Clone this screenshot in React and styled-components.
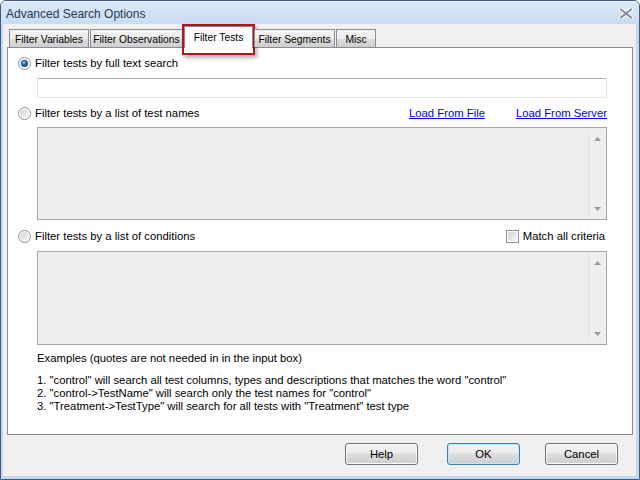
import styled, { createGlobalStyle } from "styled-components";

const GlobalStyle = createGlobalStyle`
  html, body {
    margin: 0;
    padding: 0;
    background: #ffffff;
  }
  * {
    box-sizing: border-box;
  }
`;

const TABS = [
  { label: "Filter Variables", width: 80 },
  { label: "Filter Observations", width: 93 },
  { label: "Filter Tests", width: 69, active: true },
  { label: "Filter Segments", width: 81 },
  { label: "Misc", width: 40 },
];

const EXAMPLES = [
  '1. "control" will search all test columns, types and descriptions that matches the word "control"',
  '2. "control->TestName" will search only the test names for "control"',
  '3. "Treatment->TestType" will search for all tests with "Treatment" test type',
];

const Radio = ({ checked }) => (
  <RadioBox viewBox="0 0 13 13" width="13" height="13">
    <defs>
      <linearGradient id={checked ? "rgA" : "rgB"} x1="0" y1="0" x2="1" y2="1">
        <stop offset="0" stopColor="#cfcfcf" />
        <stop offset="1" stopColor="#fbfbfb" />
      </linearGradient>
      <radialGradient id="dot" cx="0.4" cy="0.35" r="0.7">
        <stop offset="0" stopColor="#8ed0ff" />
        <stop offset="0.5" stopColor="#1b6fb8" />
        <stop offset="1" stopColor="#0b2f55" />
      </radialGradient>
    </defs>
    <circle cx="6.5" cy="6.5" r="6" fill="#ffffff" stroke="#8e8f8f" />
    <circle cx="6.5" cy="6.5" r="4.5" fill={`url(#${checked ? "rgA" : "rgB"})`} />
    {checked && <circle cx="6.5" cy="6.5" r="3.2" fill="url(#dot)" stroke="#1f3f63" strokeWidth="0.6" />}
  </RadioBox>
);

const Check = () => (
  <CheckBox>
    <CheckInner />
  </CheckBox>
);

const ScrollArrow = ({ up }) => (
  <svg width="7" height="4" viewBox="0 0 7 4">
    <path d={up ? "M0 4 L3.5 0 L7 4 Z" : "M0 0 L3.5 4 L7 0 Z"} fill="#9a9a9a" />
  </svg>
);

const ListArea = ({ height }) => (
  <List $h={height}>
    <ScrollBar>
      <ScrollArrow up />
      <ScrollArrow />
    </ScrollBar>
  </List>
);

const App = () => {
  return (
    <>
      <GlobalStyle />
      <Window>
        <TitleBar>
          <Title>Advanced Search Options</Title>
          <CloseGlyph width="14" height="11" viewBox="0 0 14 11">
            <path d="M2 1.5 L12 9.5 M12 1.5 L2 9.5" stroke="#ffffff" strokeWidth="4" strokeLinecap="round" />
            <path d="M2 1.5 L12 9.5 M12 1.5 L2 9.5" stroke="#7f8c9c" strokeWidth="2.2" strokeLinecap="round" />
          </CloseGlyph>
        </TitleBar>
        <Client>
          <TabStrip>
            {TABS.map((t) => (
              <Tab key={t.label} $active={t.active} $w={t.width}>
                {t.label}
                {t.active && <Highlight />}
              </Tab>
            ))}
          </TabStrip>
          <Pane>
            <OptionRow $gap={1}>
              <Radio checked />
              <Label>Filter tests by full text search</Label>
            </OptionRow>
            <TextInput />
            <OptionRow $gap={7}>
              <Radio />
              <Label>Filter tests by a list of test names</Label>
              <Links>
                <Link>Load From File</Link>
                <Link>Load From Server</Link>
              </Links>
            </OptionRow>
            <Indented $top={6}>
              <ListArea height={93} />
            </Indented>
            <OptionRow $gap={8}>
              <Radio />
              <Label>Filter tests by a list of conditions</Label>
              <CheckOption>
                <Check />
                <Label>Match all criteria</Label>
              </CheckOption>
            </OptionRow>
            <Indented $top={7}>
              <ListArea height={94} />
            </Indented>
            <Examples>
              <p>Examples (quotes are not needed in in the input box)</p>
              <ol>
                {EXAMPLES.map((e) => (
                  <li key={e}>{e}</li>
                ))}
              </ol>
            </Examples>
          </Pane>
          <ButtonRow>
            <Button $mr={29}>Help</Button>
            <Button $mr={25} $default>OK</Button>
            <Button $mr={18}>Cancel</Button>
          </ButtonRow>
        </Client>
      </Window>
    </>
  );
};

const Window = styled.div`
  width: 640px;
  height: 480px;
  border: 1px solid #3e5c82;
  border-radius: 6px 6px 0 0;
  background: #c4d8ef;
  display: flex;
  flex-direction: column;
  font-family: "Liberation Sans", Arial, sans-serif;
  color: #000;
  overflow: hidden;
`;

const TitleBar = styled.div`
  height: 23px;
  display: flex;
  align-items: center;
  justify-content: space-between;
  padding: 0 6px 0 5px;
  background: linear-gradient(#dce8f6, #c9dcf2);
  border-top: 1px solid #eef4fb;
`;

const Title = styled.div`
  font-size: 12px;
  color: #1e395b;
  padding-top: 1px;
`;

const CloseGlyph = styled.svg`
  display: block;
  margin-top: 1px;
`;

const Client = styled.div`
  width: 633px;
  height: 452px;
  margin-left: 2px;
  background: #f0f0f0;
  padding-top: 2px;
  display: flex;
  flex-direction: column;
`;

const TabStrip = styled.div`
  height: 21px;
  display: flex;
  align-items: flex-end;
  padding-left: 6px;
  position: relative;
  z-index: 2;
`;

const Tab = styled.div`
  position: relative;
  width: ${(p) => p.$w}px;
  height: ${(p) => (p.$active ? "22px" : "18px")};
  margin-bottom: ${(p) => (p.$active ? "-1px" : "0")};
  margin-right: 1px;
  border: 1px solid #898c95;
  border-bottom: 0;
  background: ${(p) =>
    p.$active ? "#ffffff" : "linear-gradient(#f3f3f3 0%, #ebebeb 50%, #dddddd 51%, #cfcfcf 100%)"};
  font-size: 10.3px;
  display: flex;
  align-items: center;
  justify-content: center;
  padding-top: ${(p) => (p.$active ? "0" : "1px")};
  white-space: nowrap;
`;

const Highlight = styled.div`
  position: absolute;
  left: -3px;
  right: -3px;
  top: -3px;
  bottom: -7px;
  border: 2px solid #b2161c;
  box-shadow: 2px 3px 4px rgba(0, 0, 0, 0.3);
  pointer-events: none;
`;

const Pane = styled.div`
  width: 626px;
  height: 388px;
  margin-left: 4px;
  background: #ffffff;
  border: 1px solid #898c95;
  padding: 6px 25px 0 10px;
  display: flex;
  flex-direction: column;
  font-size: 11.3px;
`;

const OptionRow = styled.div`
  height: 16px;
  margin-top: ${(p) => p.$gap || 0}px;
  display: flex;
  align-items: center;
  gap: 4px;
`;

const RadioBox = styled.svg`
  display: block;
  flex: none;
`;

const Label = styled.span`
  white-space: nowrap;
`;

const TextInput = styled.div`
  margin: 7px 0 0 19px;
  height: 20px;
  border: 1px solid #abadb3;
  border-left-color: #e2e3ea;
  border-right-color: #dbdfe6;
  border-bottom-color: #e3e9ef;
  border-radius: 2px;
  background: #ffffff;
`;

const Links = styled.div`
  margin-left: auto;
  display: flex;
  gap: 31px;
`;

const Link = styled.span`
  color: #0000ff;
  text-decoration: underline;
`;

const CheckOption = styled.div`
  margin-left: auto;
  margin-right: 2px;
  display: flex;
  align-items: center;
  gap: 4px;
`;

const CheckBox = styled.div`
  width: 13px;
  height: 13px;
  border: 1px solid #8f8f8f;
  background: #ffffff;
  padding: 1px;
`;

const CheckInner = styled.div`
  width: 100%;
  height: 100%;
  background: linear-gradient(135deg, #d4d4d4, #f6f6f6);
`;

const Indented = styled.div`
  margin: ${(p) => p.$top}px 0 0 19px;
`;

const List = styled.div`
  height: ${(p) => p.$h}px;
  border: 1px solid #a6a6a6;
  background: #eeeeee;
  display: flex;
  justify-content: flex-end;
  padding: 1px 1px 1px 0;
`;

const ScrollBar = styled.div`
  width: 17px;
  border-left: 1px solid #e2e2e2;
  background: #efefef;
  display: flex;
  flex-direction: column;
  justify-content: space-between;
  align-items: center;
  padding: 8px 0 7px;
`;

const Examples = styled.div`
  margin: 7px 0 0 19px;
  font-size: 11.3px;
  line-height: 13px;

  p {
    margin: 0;
  }

  ol {
    list-style: none;
    margin: 9px 0 0;
    padding: 0;
  }
`;

const ButtonRow = styled.div`
  display: flex;
  justify-content: flex-end;
  padding-top: 8px;
`;

const Button = styled.button`
  width: 73px;
  height: 22px;
  margin-right: ${(p) => p.$mr}px;
  border: 1px solid ${(p) => (p.$default ? "#3c7fb1" : "#707070")};
  border-radius: 3px;
  background: linear-gradient(#f2f2f2 0%, #ebebeb 45%, #dddddd 50%, #cfcfcf 100%);
  box-shadow: inset 0 0 0 1px ${(p) => (p.$default ? "#bfe3f8" : "#fbfbfb")};
  font-family: "Liberation Sans", Arial, sans-serif;
  font-size: 11.3px;
  color: #000;
  padding: 0;
`;

export default App;
